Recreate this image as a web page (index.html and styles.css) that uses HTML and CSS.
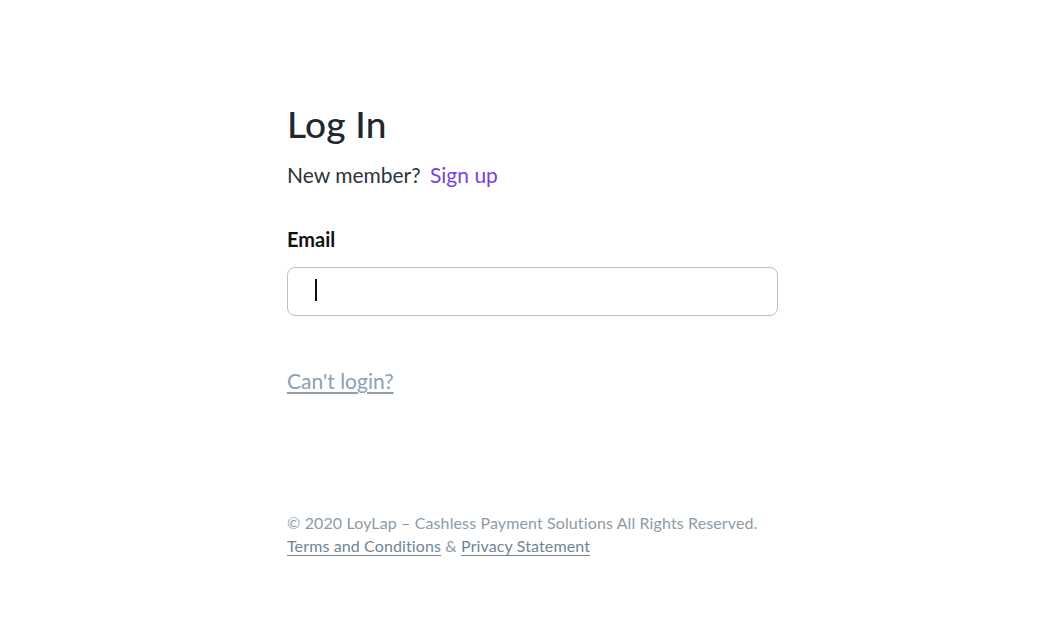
FILE: index.html
```html
<!DOCTYPE html>
<html lang="en">
<head>
<meta charset="utf-8">
<title>Log In</title>
<link rel="stylesheet" href="styles.css">
</head>
<body>
<main class="page">
  <section class="login">
    <h1 class="title">Log In</h1>
    <p class="signup">New member? <a class="signup-link" href="#">Sign up</a></p>
    <form class="form">
      <label class="label" for="email">Email</label>
      <div class="field"><span class="caret"></span></div>
    </form>
    <a class="cant" href="#">Can't login?</a>
  </section>
  <footer class="footer">
    <p class="copy">© 2020 LoyLap – Cashless Payment Solutions All Rights Reserved.</p>
    <p class="legal"><a class="flink" href="#">Terms and Conditions</a> &amp; <a class="flink" href="#">Privacy Statement</a></p>
  </footer>
</main>
</body>
</html>
```
FILE: styles.css
```css
* { box-sizing: border-box; }
html, body { margin: 0; padding: 0; background: #fff; }
body { font-family: Lato, "Noto Sans", sans-serif; color: #2b343c; }
.page { padding: 102px 0 0 287px; }
.login { width: 491px; display: flex; flex-direction: column; align-items: flex-start; }
.title { margin: 0; font-size: 37px; line-height: 44px; font-weight: 500; color: #1e2830; letter-spacing: 0.2px; }
.signup { margin: 15px 0 0; font-size: 21px; line-height: 28px; color: #2b343c; }
.signup-link { color: #7a3fe0; text-decoration: none; margin-left: 4px; }
.form { margin-top: 37px; width: 100%; display: flex; flex-direction: column; }
.label { font-size: 20px; line-height: 26px; font-weight: 700; color: #111; }
.field { margin-top: 15px; height: 49px; width: 491px; border: 1px solid #b6c1cb; border-radius: 8px; padding: 11px 0 0 27px; }
.caret { display: block; width: 2px; height: 22px; background: #111; }
.cant { margin-top: 51px; font-size: 21px; line-height: 28px; color: #8ca1b1; text-decoration: underline; text-underline-offset: 3px; }
.footer { margin-top: 116px; font-size: 16px; line-height: 23px; color: #8e9ba6; letter-spacing: 0.12px; }
.footer p { margin: 0; }
.flink { color: #6f8596; text-decoration: underline; text-underline-offset: 3px; }
```
